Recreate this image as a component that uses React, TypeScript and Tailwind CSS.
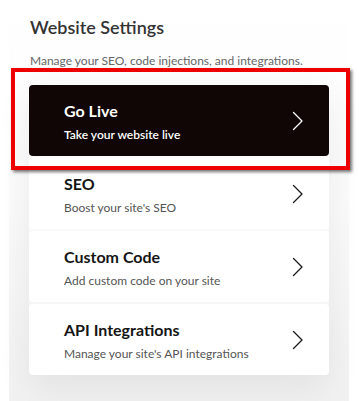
type Item = { title: string; desc: string; dark?: boolean };

const items: Item[] = [
  { title: 'Go Live', desc: 'Take your website live', dark: true },
  { title: 'SEO', desc: "Boost your site's SEO" },
  { title: 'Custom Code', desc: 'Add custom code on your site' },
  { title: 'API Integrations', desc: "Manage your site's API integrations" },
];

function Chevron({ dark }: { dark?: boolean }) {
  return (
    <svg width="12" height="20" viewBox="0 0 12 20" fill="none" className={dark ? 'text-white' : 'text-[#1a1a1a]'}>
      <path d="M1.5 1.5 L10 10 L1.5 18.5" stroke="currentColor" strokeWidth="1.3" strokeLinecap="round" strokeLinejoin="round" />
    </svg>
  );
}

function SettingCard({ item }: { item: Item }) {
  return (
    <div
      className={
        'flex h-[71px] items-center justify-between rounded-[4px] pl-[35px] pr-[25px] ' +
        (item.dark ? 'bg-[#0f0605] text-white' : 'bg-white text-[#151515]')
      }
    >
      <div className="flex flex-col pt-[2px]">
        <span className="text-[16px] font-bold leading-[20px]">{item.title}</span>
        <span
          className={
            'mt-[7px] text-[12px] leading-[14px] ' + (item.dark ? 'font-semibold text-white' : 'text-[#555]')
          }
        >
          {item.desc}
        </span>
      </div>
      <Chevron dark={item.dark} />
    </div>
  );
}

export default function App() {
  return (
    <div className="h-[401px] w-[359px] overflow-hidden bg-white font-['Lato','Noto_Sans',sans-serif]">
      <div className="relative ml-[9px] h-full w-[340px] bg-gradient-to-b from-white via-[#fbfbfb] to-[#f1f1f1] px-[20px]">
        <h1 className="pl-[1px] pt-[15px] text-[18px] font-semibold leading-[24px] text-[#333]">Website Settings</h1>
        <p className="mt-[14px] pl-[1px] text-[12px] leading-[16px] text-[#666]">
          Manage your SEO, code injections, and integrations.
        </p>
        <div className="mt-[16px] flex flex-col gap-[2px] rounded-[4px] shadow-[0_12px_36px_rgba(0,0,0,0.07)]">
          {items.map((it) => (
            <SettingCard key={it.title} item={it} />
          ))}
        </div>
        <div className="pointer-events-none absolute left-[2px] top-[68px] h-[102px] w-[339px] border-[4px] border-[#ee0000] shadow-[2px_2px_3px_rgba(0,0,0,0.55)]" />
      </div>
    </div>
  );
}
